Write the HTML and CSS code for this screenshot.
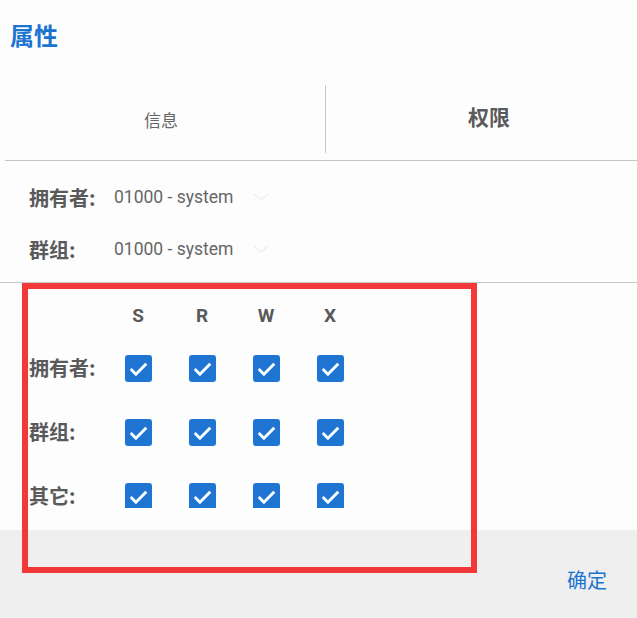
FILE: index.html
```html
<!DOCTYPE html>
<html lang="zh">
<head>
<meta charset="utf-8">
<title>属性</title>
<link rel="stylesheet" href="styles.css">
</head>
<body>
<div class="dialog">
  <div class="title">属性</div>
  <div class="tabs">
    <div class="tab tab-info">信息</div>
    <div class="tab tab-perm">权限</div>
  </div>
  <div class="owners">
    <div class="owner-row">
      <span class="owner-label">拥有者:</span>
      <span class="owner-value">01000 - system</span>
      <svg class="spin" width="18" height="10" viewBox="0 0 18 10"><path d="M2 2 L9 8 L16 2" fill="none" stroke="#f2f2f2" stroke-width="2"/></svg>
    </div>
    <div class="owner-row">
      <span class="owner-label">群组:</span>
      <span class="owner-value">01000 - system</span>
      <svg class="spin" width="18" height="10" viewBox="0 0 18 10"><path d="M2 2 L9 8 L16 2" fill="none" stroke="#f2f2f2" stroke-width="2"/></svg>
    </div>
  </div>
  <div class="perm-area">
    <div class="perm-grid">
      <div class="cell"></div>
      <div class="cell head">S</div>
      <div class="cell head">R</div>
      <div class="cell head">W</div>
      <div class="cell head">X</div>

      <div class="cell row-label"><span class="lbl">拥有者:</span></div>
      <div class="cell"><span class="cb"><svg viewBox="0 0 26 26"><path d="M5.5 13.5 L10.5 18.5 L20.5 8.5"/></svg></span></div>
      <div class="cell"><span class="cb"><svg viewBox="0 0 26 26"><path d="M5.5 13.5 L10.5 18.5 L20.5 8.5"/></svg></span></div>
      <div class="cell"><span class="cb"><svg viewBox="0 0 26 26"><path d="M5.5 13.5 L10.5 18.5 L20.5 8.5"/></svg></span></div>
      <div class="cell"><span class="cb"><svg viewBox="0 0 26 26"><path d="M5.5 13.5 L10.5 18.5 L20.5 8.5"/></svg></span></div>

      <div class="cell row-label"><span class="lbl">群组:</span></div>
      <div class="cell"><span class="cb"><svg viewBox="0 0 26 26"><path d="M5.5 13.5 L10.5 18.5 L20.5 8.5"/></svg></span></div>
      <div class="cell"><span class="cb"><svg viewBox="0 0 26 26"><path d="M5.5 13.5 L10.5 18.5 L20.5 8.5"/></svg></span></div>
      <div class="cell"><span class="cb"><svg viewBox="0 0 26 26"><path d="M5.5 13.5 L10.5 18.5 L20.5 8.5"/></svg></span></div>
      <div class="cell"><span class="cb"><svg viewBox="0 0 26 26"><path d="M5.5 13.5 L10.5 18.5 L20.5 8.5"/></svg></span></div>

      <div class="cell row-label last-label"><span class="lbl">其它:</span></div>
      <div class="cell last"><span class="cb"><svg viewBox="0 0 26 26"><path d="M5.5 13.5 L10.5 18.5 L20.5 8.5"/></svg></span></div>
      <div class="cell last"><span class="cb"><svg viewBox="0 0 26 26"><path d="M5.5 13.5 L10.5 18.5 L20.5 8.5"/></svg></span></div>
      <div class="cell last"><span class="cb"><svg viewBox="0 0 26 26"><path d="M5.5 13.5 L10.5 18.5 L20.5 8.5"/></svg></span></div>
      <div class="cell last"><span class="cb"><svg viewBox="0 0 26 26"><path d="M5.5 13.5 L10.5 18.5 L20.5 8.5"/></svg></span></div>
    </div>
  </div>
  <div class="spacer"></div>
  <div class="footer">
    <span class="ok">确定</span>
  </div>
  <div class="highlight"></div>
</div>
</body>
</html>
```

FILE: styles.css
```css
* { box-sizing: border-box; }
html, body {
  margin: 0;
  padding: 0;
  height: 618px;
  overflow: hidden;
  background: #fdfdfd;
}
body {
  font-family: Roboto, "Noto Sans CJK SC", sans-serif;
  color: #5c5c5c;
}
.dialog {
  position: relative;
  width: 637px;
  height: 618px;
  display: flex;
  flex-direction: column;
}
.title {
  height: 72px;
  padding: 0 0 4px 10px;
  display: flex;
  align-items: center;
  font-family: "Noto Sans CJK SC", sans-serif;
  font-size: 24px;
  font-weight: 700;
  color: #1b74d0;
}
.tabs {
  height: 89px;
  margin-left: 5px;
  display: flex;
  border-bottom: 1px solid #c4c4c4;
}
.tab {
  display: flex;
  align-items: center;
  justify-content: center;
  font-family: "Noto Sans CJK SC", sans-serif;
}
.tab-info {
  width: 321px;
  padding-right: 8px;
  margin: 13px 0 7px;
  border-right: 1px solid #c8c8c8;
  font-size: 17px;
  color: #666;
}
.tab-perm {
  flex: 1;
  padding-left: 15px;
  padding-bottom: 1px;
  font-size: 21px;
  font-weight: 700;
  color: #5a5a5a;
}
.owners {
  padding: 10px 0 7px 29px;
  border-bottom: 1px solid #c8c8c8;
}
.owner-row {
  height: 52px;
  display: flex;
  align-items: center;
}
.owner-label {
  width: 85px;
  font-family: "Noto Sans CJK SC", sans-serif;
  font-size: 20px;
  font-weight: 700;
  color: #5a5a5a;
}
.owner-value {
  font-size: 17.5px;
  color: #666;
}
.spin {
  margin-left: 19px;
}
.perm-area {
  height: 224px;
  padding: 12px 0 0 29px;
}
.perm-grid {
  display: grid;
  grid-template-columns: 77px repeat(4, 64px);
  grid-template-rows: 41px 64px 64px 44px;
}
.cell {
  display: flex;
  align-items: center;
  justify-content: center;
}
.cell.last {
  align-items: flex-start;
  padding-top: 19px;
  overflow: hidden;
}
.head {
  font-size: 19px;
  font-weight: 700;
  color: #5a5a5a;
}
.row-label {
  justify-content: flex-start;
  font-family: "Noto Sans CJK SC", sans-serif;
  font-size: 20px;
  line-height: 1;
  font-weight: 700;
  color: #5a5a5a;
}
.row-label.last-label {
  align-items: flex-start;
  padding-top: 22px;
}
.lbl {
  display: block;
  line-height: 20px;
}
.cb {
  flex: none;
  width: 27px;
  height: 27px;
  border-radius: 3px;
  background: #1e76d2;
  display: block;
}
.cb svg {
  width: 27px;
  height: 27px;
  display: block;
}
.cb path {
  fill: none;
  stroke: #fff;
  stroke-width: 2.8;
}
.spacer {
  height: 23px;
}
.footer {
  flex: 1;
  background: #efefef;
  display: flex;
  align-items: center;
  justify-content: flex-end;
  padding: 10px 30px 0 0;
}
.ok {
  font-family: "Noto Sans CJK SC", sans-serif;
  font-size: 20px;
  color: #1b74d0;
}
.highlight {
  position: absolute;
  left: 22px;
  top: 283px;
  width: 455px;
  height: 290px;
  border: 6px solid #f23838;
  pointer-events: none;
}
```
